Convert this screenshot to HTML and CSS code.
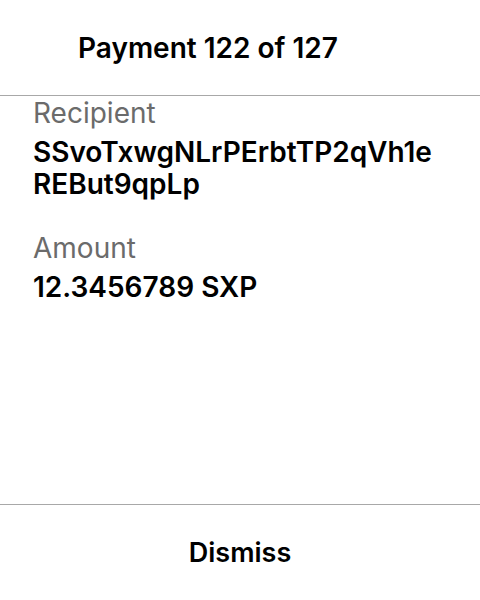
FILE: index.html
```html
<!DOCTYPE html>
<html>
<head>
<meta charset="utf-8">
<link rel="stylesheet" href="styles.css">
</head>
<body>
<div class="sheet">
  <header class="head">
    <h1 class="title">Payment 122 of 127</h1>
  </header>
  <main class="content">
    <div class="field">
      <div class="label">Recipient</div>
      <div class="value">SSvoTxwgNLrPErbtTP2qVh1e<br>REBut9qpLp</div>
    </div>
    <div class="field">
      <div class="label">Amount</div>
      <div class="value">12.3456789 SXP</div>
    </div>
  </main>
  <footer class="foot">
    <button class="dismiss">Dismiss</button>
  </footer>
</div>
</body>
</html>
```
FILE: styles.css
```css
html, body {
  margin: 0;
  padding: 0;
  background: #fff;
}
body {
  font-family: Inter, "Noto Sans", sans-serif;
  color: #000;
}
.sheet {
  width: 480px;
  height: 600px;
  display: flex;
  flex-direction: column;
}
.head {
  height: 96px;
  flex-shrink: 0;
  border-bottom: 1px solid #a8a8a8;
  box-sizing: border-box;
  display: flex;
  align-items: center;
  padding-left: 78px;
}
.title {
  margin: 0;
  font-size: 28px;
  font-weight: 600;
  line-height: 34px;
}
.content {
  flex: 1;
  padding: 0 33px;
  display: flex;
  flex-direction: column;
  gap: 31px;
}
.label {
  font-size: 28px;
  color: #6b6b6b;
  line-height: 34px;
  margin-bottom: 6px;
}
.value {
  font-size: 28px;
  font-weight: 600;
  line-height: 32px;
}
.foot {
  height: 96px;
  flex-shrink: 0;
  border-top: 1px solid #a8a8a8;
  box-sizing: border-box;
  display: flex;
  align-items: center;
  justify-content: center;
}
.dismiss {
  border: 0;
  background: none;
  font-family: inherit;
  font-size: 27px;
  font-weight: 600;
  color: #000;
  padding: 0;
}
```
